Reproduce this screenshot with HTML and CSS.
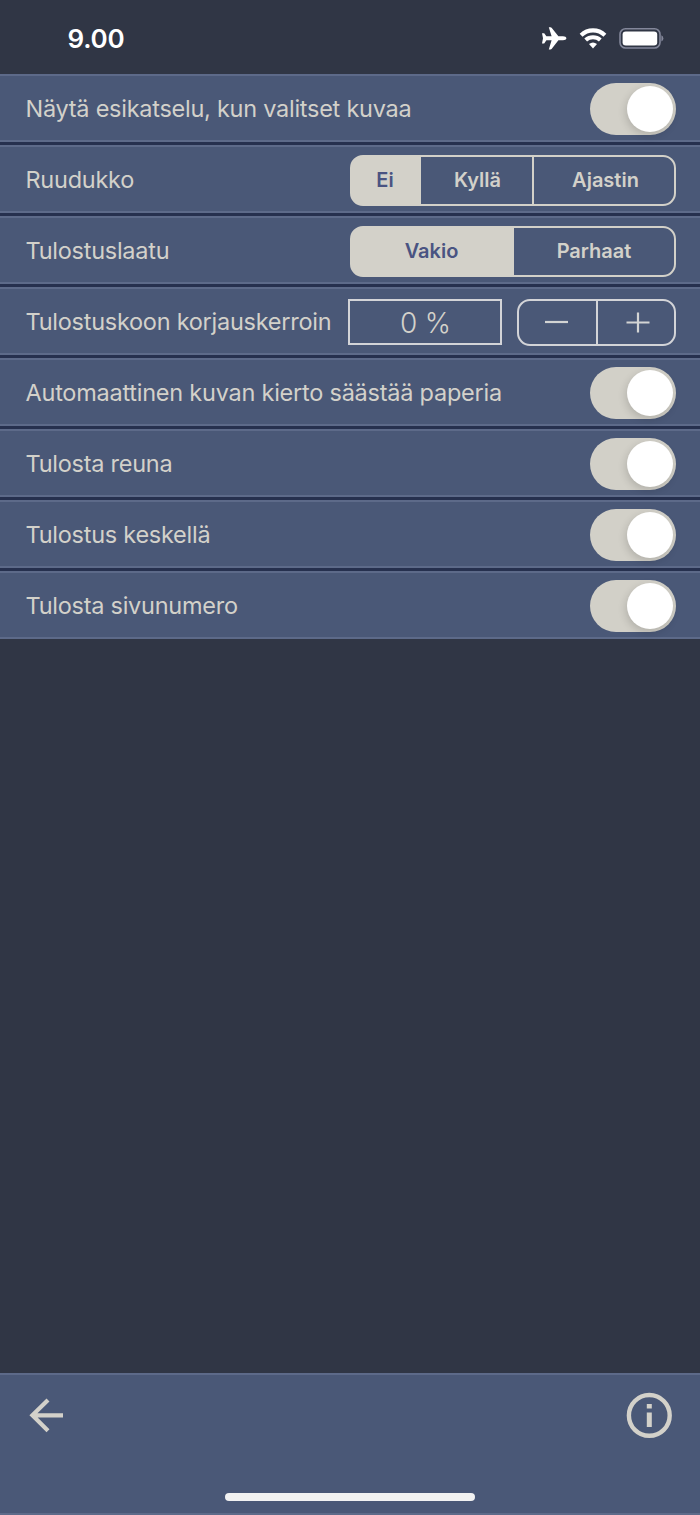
FILE: index.html
```html
<!DOCTYPE html>
<html lang="fi">
<head>
<meta charset="utf-8">
<title>Asetukset</title>
<link rel="stylesheet" href="styles.css">
</head>
<body>
<div class="screen">
  <header class="status">
    <span class="clock">9.00</span>
    <div class="indicators">
      <svg class="plane" viewBox="0 0 26 24" width="26" height="24"><path d="M25.4 12.3c0-1.2-1.5-2-3.4-2h-4.6L10.8 1.9Q10.3 1.2 9.4 1.2H7.8l2.8 9.1H5.4L3.2 7.2H1l1 5.1-1 5.1h2.2l2.2-3.1h5.2l-2.8 9.1h1.6q.9 0 1.4-.7l6.6-8.4H22c1.9 0 3.4-.8 3.4-2z"/></svg>
      <svg class="wifi" viewBox="0 0 28 22" width="28" height="22"><path d="M2.1 8.2C8.8 1.7 19.2 1.7 25.9 8.2M6.7 13C10.8 9.3 17.2 9.3 21.3 13" fill="none" stroke="#fff" stroke-width="4.1"/><path d="M14 21.4l-4-4.3q4-3.4 8 0z"/></svg>
      <svg class="battery" viewBox="0 0 46 22" width="46" height="22"><rect x="1" y="1.8" width="40" height="19.2" rx="5.5" fill="none" stroke="#83879a" stroke-width="1.6"/><rect x="3.6" y="4.4" width="34.6" height="14" rx="3.2"/><path d="M42.4 8.3q2 1 2 3.1t-2 3.1z" fill="#83879a"/></svg>
    </div>
  </header>
  <main class="settings">
    <div class="row"><span class="label">Näytä esikatselu, kun valitset kuvaa</span><span class="toggle"><i class="knob"></i></span></div>
    <div class="row"><span class="label">Ruudukko</span><div class="segments three"><span class="segment active">Ei</span><span class="segment">Kyllä</span><span class="segment">Ajastin</span></div></div>
    <div class="row"><span class="label">Tulostuslaatu</span><div class="segments two"><span class="segment active">Vakio</span><span class="segment">Parhaat</span></div></div>
    <div class="row"><span class="label">Tulostuskoon korjauskerroin</span><div class="adjust"><span class="value">0 %</span><div class="stepper"><span class="step"><svg viewBox="0 0 24 24" width="24" height="24"><path d="M0 12h23"/></svg></span><span class="step"><svg viewBox="0 0 24 24" width="24" height="24"><path d="M.5 12.5h23M12 2.5v20"/></svg></span></div></div></div>
    <div class="row"><span class="label long">Automaattinen kuvan kierto säästää paperia</span><span class="toggle"><i class="knob"></i></span></div>
    <div class="row"><span class="label">Tulosta reuna</span><span class="toggle"><i class="knob"></i></span></div>
    <div class="row"><span class="label">Tulostus keskellä</span><span class="toggle"><i class="knob"></i></span></div>
    <div class="row"><span class="label">Tulosta sivunumero</span><span class="toggle"><i class="knob"></i></span></div>
  </main>
  <footer class="toolbar">
    <div class="actions">
      <svg class="back" viewBox="0 0 36 36" width="36" height="36"><path d="M35 18.3H5M20 2.9L4.4 18.3 20 33.7" fill="none" stroke="#d3d1ca" stroke-width="4.2"/></svg>
      <svg class="info" viewBox="0 0 46 46" width="46" height="46"><circle cx="23.3" cy="23.4" r="20.4" fill="none" stroke="#d3d1ca" stroke-width="4.4"/><path d="M20.8 12h5v4.6h-5zM20.8 20.6h5v14.4h-5z" fill="#d3d1ca"/></svg>
    </div>
    <span class="home"></span>
  </footer>
</div>
</body>
</html>
```
FILE: styles.css
```css
* { box-sizing: border-box; }
body { margin: 0; background: #303645; font-family: Inter, "Liberation Sans", sans-serif; color: #d3d1ca; }
svg { display: block; }
.screen { height: 1515px; display: flex; flex-direction: column; overflow: hidden; }
.status { height: 74px; display: flex; justify-content: space-between; align-items: center; padding: 3px 35px 0 67.5px; color: #fff; }
.clock { font-size: 26px; font-weight: 600; line-height: 32px; letter-spacing: -.2px; }
.indicators { display: flex; align-items: center; gap: 12px; fill: #fff; margin-top: -1px; }
.settings { display: flex; flex-direction: column; gap: 3px; background: #26304e; }
.row { height: 68px; display: flex; justify-content: space-between; align-items: center; padding: 2px 24px 0 25.5px; background: #4a5877; border-top: 2px solid #5d6a89; border-bottom: 2px solid #5d6a89; }
.label { font-size: 23.5px; line-height: 30px; white-space: nowrap; letter-spacing: -.26px; }
.label.long { letter-spacing: -.24px; }
.toggle { width: 86px; height: 52px; border-radius: 26px; background: #d2d0c8; padding: 3px; display: flex; justify-content: flex-end; }
.knob { width: 46px; height: 46px; border-radius: 50%; background: #fff; box-shadow: -1px 3px 8px rgba(0, 0, 0, .16); }
.segments { width: 326px; height: 51px; display: grid; border: 2px solid #d3d1c9; border-radius: 13px; overflow: hidden; font-size: 20px; font-weight: 600; background: linear-gradient(to right, #d3d1c9 30px, transparent 30px); }
.three { grid-template-columns: 69px 113px 1fr; }
.two { grid-template-columns: 162px 1fr; }
.segment { display: flex; align-items: center; justify-content: center; }
.segment.active { background: #d3d1c9; color: #4a5482; padding-right: 3px; }
.three .segment:nth-child(2) { border-right: 2px solid #d3d1c9; padding-left: 2px; }
.three .segment:nth-child(3) { padding-left: 3px; }
.adjust { display: flex; gap: 15px; align-items: center; }
.value { width: 154px; height: 46px; border: 2px solid #d3d4d8; display: flex; align-items: center; justify-content: center; font-size: 28px; font-weight: 350; padding: 1px 0 0 1px; letter-spacing: -.2px; }
.stepper { width: 159px; height: 47px; display: grid; grid-template-columns: 79px 1fr; border: 2px solid #d3d4d8; border-radius: 13px; }
.step { display: flex; align-items: center; justify-content: center; }
.step:first-child { border-right: 2px solid #d3d4d8; padding-right: 1px; }
.step:last-child { padding-left: 3px; }
.step path { stroke: #d3d4d4; stroke-width: 2.2; }
.toolbar { height: 142px; margin-top: auto; background: #4a5877; border-top: 2px solid #5d6a89; border-bottom: 2px solid #5d6a89; display: flex; flex-direction: column; align-items: center; justify-content: space-between; padding: 17px 28px 12px; }
.actions { width: 100%; display: flex; justify-content: space-between; align-items: center; }
.home { width: 250px; height: 8px; border-radius: 4px; background: #f2f2f2; }
```
